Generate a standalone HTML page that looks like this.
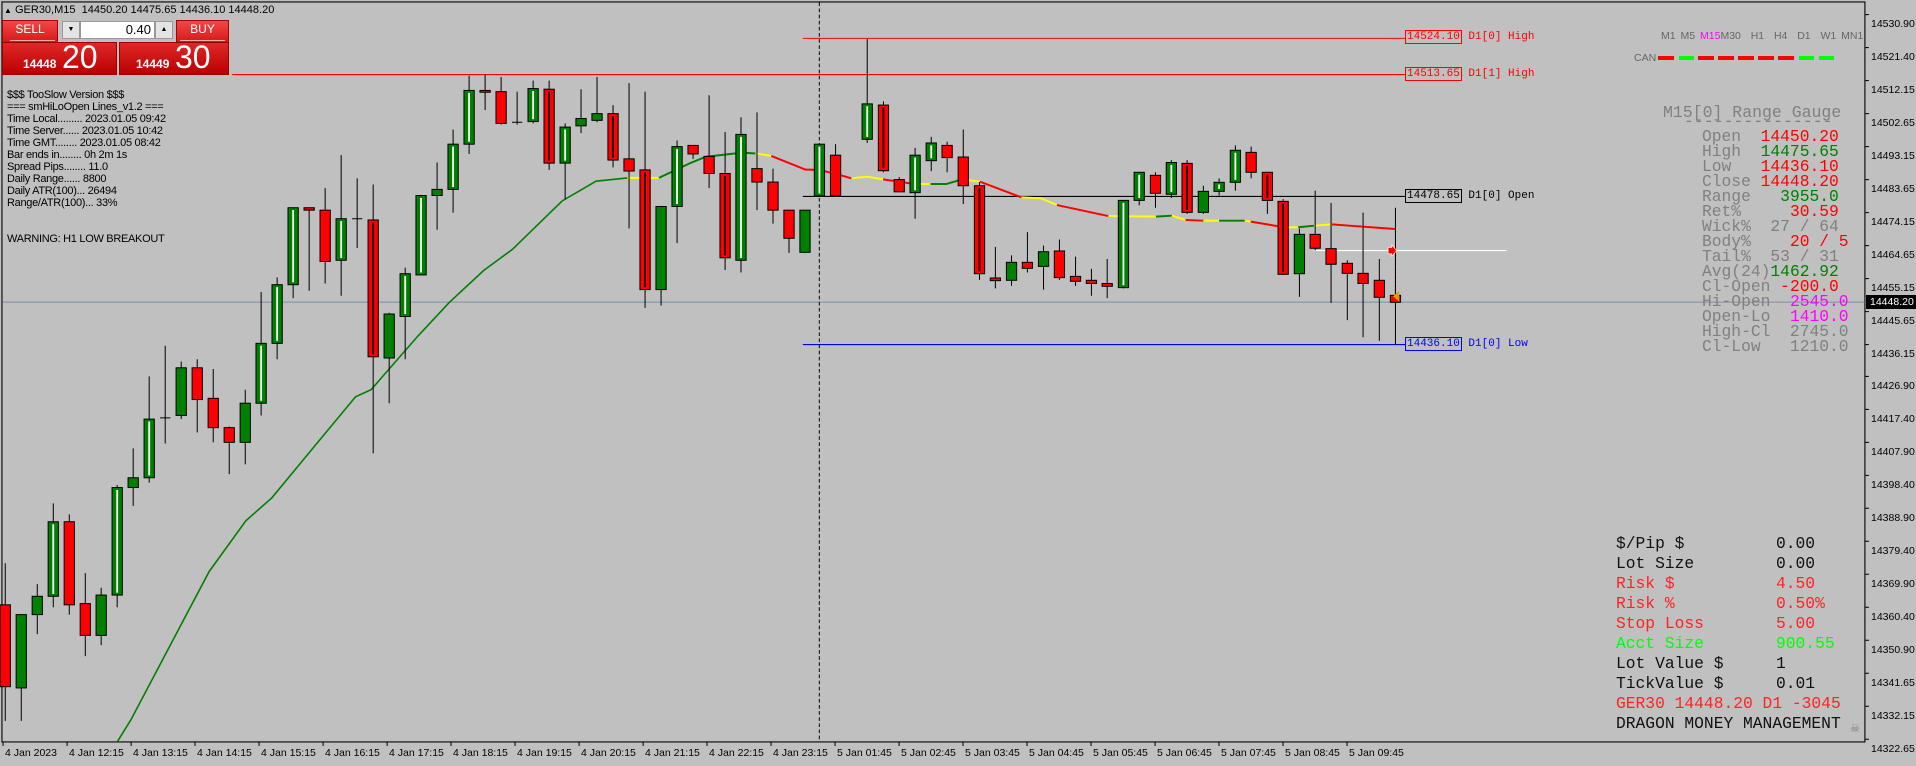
<!DOCTYPE html>
<html><head><meta charset="utf-8"><style>
*{margin:0;padding:0;box-sizing:border-box}
body{width:1916px;height:764px;background:#c0c0c0;position:relative;overflow:hidden;font-family:"Liberation Sans",sans-serif}
.a{position:absolute;white-space:pre}
.t{font-size:11px;color:#000;line-height:12px}
.ax{font-size:10.5px;color:#000}
.m{font-family:"Liberation Mono",monospace}
.rg{font-size:16.3px;line-height:15px;color:#808080}
.mm{font-size:16.3px;line-height:20px}
</style></head><body>
<svg class="a" style="left:0;top:0" width="1916" height="764" viewBox="0 0 1568 625.26" preserveAspectRatio="none">
<style>.w{stroke:#000;stroke-width:.82;fill:none}.g{fill:#008000;stroke:#000;stroke-width:.82}.r{fill:#f00;stroke:#000;stroke-width:.82}</style>
<!-- frame -->
<rect x="1.6" y="1.6" width="1524.6" height="605.6" fill="none" stroke="#000" stroke-width=".9"/>
<!-- price line -->
<line x1="2" y1="247.3" x2="1526" y2="247.3" stroke="#7890a8" stroke-width=".8"/>
<!-- level lines -->
<line x1="190" y1="61" x2="1150" y2="61" stroke="#f00" stroke-width=".9"/>
<line x1="657" y1="31.4" x2="1150" y2="31.4" stroke="#f00" stroke-width=".9"/>
<line x1="657" y1="160.8" x2="1150" y2="160.8" stroke="#000" stroke-width=".9"/>
<line x1="657" y1="282" x2="1150" y2="282" stroke="#00f" stroke-width=".9"/>
<line x1="670.5" y1="2" x2="670.5" y2="607" stroke="#000" stroke-width=".8" stroke-dasharray="3,2"/>
<line x1="1075" y1="205.1" x2="1233" y2="205.1" stroke="#fff" stroke-width=".9"/>
<line x1="1142" y1="205" x2="1142" y2="245" stroke="#f00" stroke-width=".9" stroke-dasharray="2,1.5"/>
<!-- MA -->
<polyline fill="none" stroke="#008000" stroke-width="1.3" points="96,607 107,589.3 141.2,524.5 171.2,467.7 201.1,426.3 222.5,407.4 256.7,366 291,324.7 303.8,318.8 342.3,274.7 368,247.2 395.8,221.4 419.3,204.1 460,164.5 487.8,148.3 513.5,145.6"/>
<polyline fill="none" stroke="#ff0" stroke-width="1.6" points="513.5,145.6 539.2,145.6"/>
<polyline fill="none" stroke="#008000" stroke-width="1.6" points="539.2,145.6 564.8,133.5 577.7,128.3 607.6,124.9 618.3,125.6"/>
<polyline fill="none" stroke="#ff0" stroke-width="1.6" points="618.3,125.6 631.2,127.6"/>
<polyline fill="none" stroke="#f00" stroke-width="1.6" points="631.2,127.6 659,138.7 670.9,139.1 687,143.2 696.8,145.9"/>
<polyline fill="none" stroke="#ff0" stroke-width="1.6" points="696.8,145.9 709.7,144.6 722.7,146.8"/>
<polyline fill="none" stroke="#f00" stroke-width="1.6" points="722.7,146.8 748.5,150.6"/>
<polyline fill="none" stroke="#ff0" stroke-width="1.6" points="748.5,150.6 761.5,150.6"/>
<polyline fill="none" stroke="#008000" stroke-width="1.6" points="761.5,150.6 774.4,150.6 787.4,146.8"/>
<polyline fill="none" stroke="#ff0" stroke-width="1.6" points="787.4,146.8 802,148.7"/>
<polyline fill="none" stroke="#f00" stroke-width="1.6" points="802,148.7 835.9,161.5"/>
<polyline fill="none" stroke="#ff0" stroke-width="1.6" points="835.9,161.5 852.1,162.3 865,167.8"/>
<polyline fill="none" stroke="#f00" stroke-width="1.6" points="865,167.8 907.1,176.8"/>
<polyline fill="none" stroke="#ff0" stroke-width="1.6" points="907.1,176.8 946,177.3"/>
<polyline fill="none" stroke="#008000" stroke-width="1.6" points="946,177.3 959,176.5"/>
<polyline fill="none" stroke="#ff0" stroke-width="1.6" points="959,176.5 970.2,180"/>
<polyline fill="none" stroke="#f00" stroke-width="1.6" points="970.2,180 984.8,180.6"/>
<polyline fill="none" stroke="#ff0" stroke-width="1.6" points="984.8,180.6 997.7,180.6"/>
<polyline fill="none" stroke="#008000" stroke-width="1.6" points="997.7,180.6 1018.7,180.6"/>
<polyline fill="none" stroke="#ff0" stroke-width="1.6" points="1018.7,180.6 1023.6,181.4"/>
<polyline fill="none" stroke="#f00" stroke-width="1.6" points="1023.6,181.4 1051,186"/>
<polyline fill="none" stroke="#ff0" stroke-width="1.6" points="1051,186 1062.4,186"/>
<polyline fill="none" stroke="#008000" stroke-width="1.6" points="1062.4,186 1075.4,184.7"/>
<polyline fill="none" stroke="#ff0" stroke-width="1.6" points="1075.4,184.7 1090,183.6"/>
<polyline fill="none" stroke="#f00" stroke-width="1.6" points="1090,183.6 1104.5,184.7 1141.7,187.4"/>
<!-- wicks -->
<path class="w" d="M4.3 461V590M17.4 503V590M30.5 478V519M43.6 412V497M56.7 421V503M69.8 469V537M82.8 481V528M95.9 397V497M109 367V414M122.1 308V395M135.2 283V363M148.3 296V343M161.4 294V354M174.5 302V362M187.6 349V388M200.7 319V380M213.7 239V340M226.8 227V294M239.9 170V244M253 170V238M266.1 154V232M279.2 127V242M292.3 146V203M305.4 151V371M318.5 256V330M331.6 219V294M344.6 160V225M357.7 133V188M370.8 106V174M383.9 62V126M397 61V90M410.1 63V102M423.2 75V102M436.3 66V101M449.4 66V139M462.5 101V163M475.5 73V109M488.6 63V100M501.7 86V137M514.8 68V187M527.9 75V252M541 169V250M554.1 115V199M567.2 119V130M580.3 78V154M593.4 108V221M606.4 96V223M619.5 92V172M632.6 138V183M645.7 172V207M658.8 172V207M670.6 118V160M683.8 118V160M709.7 32V117M723 83V141M735.9 145V157M748.9 121V179M762.1 112V140M775.1 116V141M788.3 106V167M801.6 149V229M814.6 202V236M827.8 209V234M840.8 190V223M854 201V237M867 196V229M880.2 210V234M893.2 220V242M906.1 212V244M919.4 164V236M932.3 141V168M945.6 141V170M958.6 131V162M971.5 131V175M984.8 152V175M997.7 146V160M1011 119V156M1023.9 120V146M1037.2 141V175M1050.1 163V225M1063.4 187V243M1076.3 156V205M1089.3 166V248M1102.6 213V262M1115.5 174V276M1128.8 212V279M1142 170V282M131 342H139.4M288.1 179H296.5M419 100H427.4"/>
<!-- bodies -->
<rect class="r" x="0.1" y="495" width="8.4" height="67"/>
<rect class="g" x="13.2" y="503" width="8.4" height="60"/>
<rect class="g" x="26.3" y="488" width="8.4" height="15"/>
<rect class="g" x="39.4" y="427" width="8.4" height="61"/>
<rect class="r" x="52.5" y="427" width="8.4" height="68"/>
<rect class="r" x="65.6" y="494" width="8.4" height="26"/>
<rect class="g" x="78.6" y="487" width="8.4" height="33"/>
<rect class="g" x="91.7" y="399" width="8.4" height="88"/>
<rect class="g" x="104.8" y="391" width="8.4" height="8"/>
<rect class="g" x="117.9" y="343" width="8.4" height="48"/>
<rect class="g" x="144.1" y="301" width="8.4" height="39"/>
<rect class="r" x="157.2" y="301" width="8.4" height="26"/>
<rect class="r" x="170.3" y="326" width="8.4" height="24"/>
<rect class="r" x="183.4" y="350" width="8.4" height="12"/>
<rect class="g" x="196.5" y="330" width="8.4" height="32"/>
<rect class="g" x="209.5" y="281" width="8.4" height="49"/>
<rect class="g" x="222.6" y="233" width="8.4" height="48"/>
<rect class="g" x="235.7" y="170" width="8.4" height="63"/>
<rect class="r" x="248.8" y="170" width="8.4" height="2"/>
<rect class="r" x="261.9" y="172" width="8.4" height="42"/>
<rect class="g" x="275" y="179" width="8.4" height="34"/>
<rect class="r" x="301.2" y="180" width="8.4" height="112"/>
<rect class="g" x="314.3" y="257" width="8.4" height="36"/>
<rect class="g" x="327.4" y="224" width="8.4" height="35"/>
<rect class="g" x="340.4" y="160" width="8.4" height="65"/>
<rect class="g" x="353.5" y="155" width="8.4" height="5"/>
<rect class="g" x="366.6" y="118" width="8.4" height="37"/>
<rect class="g" x="379.7" y="74" width="8.4" height="44"/>
<rect class="r" x="392.8" y="74" width="8.4" height="1.5"/>
<rect class="r" x="405.9" y="75" width="8.4" height="26"/>
<rect class="g" x="432.1" y="72.5" width="8.4" height="27"/>
<rect class="r" x="445.2" y="73" width="8.4" height="60.5"/>
<rect class="g" x="458.3" y="104" width="8.4" height="29.5"/>
<rect class="g" x="471.3" y="97" width="8.4" height="6"/>
<rect class="g" x="484.4" y="93" width="8.4" height="5.5"/>
<rect class="r" x="497.5" y="93" width="8.4" height="38"/>
<rect class="r" x="510.6" y="130" width="8.4" height="10"/>
<rect class="r" x="523.7" y="139" width="8.4" height="98"/>
<rect class="g" x="536.8" y="169" width="8.4" height="68"/>
<rect class="g" x="549.9" y="120" width="8.4" height="49"/>
<rect class="r" x="563" y="119" width="8.4" height="7"/>
<rect class="r" x="576.1" y="128" width="8.4" height="14"/>
<rect class="r" x="589.2" y="142" width="8.4" height="69"/>
<rect class="g" x="602.2" y="110" width="8.4" height="103"/>
<rect class="r" x="615.3" y="138" width="8.4" height="11"/>
<rect class="r" x="628.4" y="149" width="8.4" height="23"/>
<rect class="r" x="641.5" y="172" width="8.4" height="23"/>
<rect class="g" x="654.6" y="172" width="8.4" height="34.5"/>
<rect class="g" x="666.4" y="118" width="8.4" height="42.4"/>
<rect class="r" x="679.6" y="127" width="8.4" height="33.4"/>
<rect class="g" x="705.5" y="85" width="8.4" height="29"/>
<rect class="r" x="718.8" y="86" width="8.4" height="53.7"/>
<rect class="r" x="731.7" y="147" width="8.4" height="10"/>
<rect class="g" x="744.7" y="127" width="8.4" height="30.7"/>
<rect class="g" x="757.9" y="117" width="8.4" height="14.5"/>
<rect class="r" x="770.9" y="119" width="8.4" height="10"/>
<rect class="r" x="784.1" y="128.5" width="8.4" height="23.5"/>
<rect class="r" x="797.4" y="152" width="8.4" height="72"/>
<rect class="r" x="810.4" y="227.5" width="8.4" height="2.2"/>
<rect class="g" x="823.6" y="214.7" width="8.4" height="14.7"/>
<rect class="r" x="836.6" y="214.7" width="8.4" height="4.9"/>
<rect class="g" x="849.8" y="206" width="8.4" height="12"/>
<rect class="r" x="862.8" y="205.4" width="8.4" height="21.8"/>
<rect class="r" x="876" y="226.2" width="8.4" height="4"/>
<rect class="r" x="889" y="229.4" width="8.4" height="2.6"/>
<rect class="r" x="901.9" y="232" width="8.4" height="2.3"/>
<rect class="g" x="915.2" y="164" width="8.4" height="71.4"/>
<rect class="g" x="928.1" y="141" width="8.4" height="23"/>
<rect class="r" x="941.4" y="143.5" width="8.4" height="14.7"/>
<rect class="g" x="954.4" y="133" width="8.4" height="26"/>
<rect class="r" x="967.3" y="133.7" width="8.4" height="40.1"/>
<rect class="g" x="980.6" y="156.6" width="8.4" height="17.2"/>
<rect class="g" x="993.5" y="149.2" width="8.4" height="7.4"/>
<rect class="g" x="1006.8" y="123" width="8.4" height="26.2"/>
<rect class="r" x="1019.7" y="124.7" width="8.4" height="16.3"/>
<rect class="r" x="1033" y="141" width="8.4" height="23"/>
<rect class="r" x="1045.9" y="164.8" width="8.4" height="59.7"/>
<rect class="g" x="1059.2" y="191.8" width="8.4" height="32.2"/>
<rect class="r" x="1072.1" y="191.8" width="8.4" height="11.4"/>
<rect class="r" x="1085.1" y="203.5" width="8.4" height="12.8"/>
<rect class="r" x="1098.4" y="215.5" width="8.4" height="8.2"/>
<rect class="r" x="1111.3" y="223.7" width="8.4" height="8.3"/>
<rect class="r" x="1124.6" y="229.4" width="8.4" height="13.9"/>
<rect class="r" x="1137.8" y="241.7" width="8.4" height="5.7"/>
<!-- stripes -->
<path stroke="#fff" stroke-width="1.5" fill="none" d="M43.6 429V486M95.9 401V485M122.1 345V389M213.7 283V328M226.8 235V279M239.9 172V231M279.2 181V211M331.6 226V257M344.6 162V223M370.8 120V153M383.9 76V116M436.3 74.5V97.5M462.5 106V131.5M554.1 122V167M606.4 112V211M670.6 120V158.4M709.7 87V112M748.9 129V155.7M762.1 119V129.5M919.4 166V233.4M932.3 143V162M958.6 135V157M997.7 151V154.6M1011 125V147.2"/>
<path stroke="#000" stroke-width="1.5" fill="none" d="M305.4 182V290M449.4 75V131.5M501.7 95V129M527.9 141V235M593.4 144V209M723 88V137.7M801.6 154V222M971.5 135.7V171.8M1037.2 143V162M1050.1 166.8V222.5"/>
<!-- arrows -->
<path d="M1136 202.5h3v-2l4 4.6-4 4.6v-2h-3z" fill="#f00" stroke="#fff" stroke-width=".5"/>
<path d="M1145 238l-5 4.5 5 4.5z" fill="#e0a000"/>
<!-- axis ticks -->
<path class="w" d="M1526 12h3.5M1526 39h3.5M1526 66h3.5M1526 93h3.5M1526 120h3.5M1526 147h3.5M1526 174h3.5M1526 201h3.5M1526 228h3.5M1526 255h3.5M1526 282h3.5M1526 308h3.5M1526 335h3.5M1526 362h3.5M1526 389h3.5M1526 416h3.5M1526 443h3.5M1526 470h3.5M1526 497h3.5M1526 524h3.5M1526 551h3.5M1526 578h3.5M1526 605h3.5"/>
<path class="w" d="M2.5 607v3.5M54.9 607v3.5M107.3 607v3.5M159.6 607v3.5M212 607v3.5M264.4 607v3.5M316.8 607v3.5M369.1 607v3.5M421.5 607v3.5M473.9 607v3.5M526.3 607v3.5M578.6 607v3.5M631 607v3.5M683.4 607v3.5M735.8 607v3.5M788.1 607v3.5M840.5 607v3.5M892.9 607v3.5M945.3 607v3.5M997.6 607v3.5M1050 607v3.5M1102.4 607v3.5"/>
</svg>

<!-- title -->
<div class="a t" style="left:4px;top:4px"><span style="font-size:8px">▲</span> GER30,M15  14450.20 14475.65 14436.10 14448.20</div>

<!-- trade panel -->
<div class="a" style="left:2px;top:20px;width:56px;height:23px;background:linear-gradient(#f04848,#d81818);border:1px solid #a00"></div>
<div class="a" style="left:10px;top:40px;width:45px;height:1px;background:#f4b0b0"></div>
<div class="a" style="left:2px;top:22px;width:56px;text-align:center;color:#fff;font-size:12px">SELL</div>
<div class="a" style="left:2px;top:42px;width:115px;height:33px;background:linear-gradient(#e02828,#b80000);border:1px solid #900"></div>
<div class="a" style="left:23px;top:57px;color:#fff;font-size:12px;font-weight:bold">14448</div>
<div class="a" style="left:62px;top:39px;color:#fff;font-size:32px">20</div>
<div class="a" style="left:62px;top:21px;width:18px;height:18px;background:#e4e4e4;border:1px solid #999;font-size:7px;text-align:center;line-height:16px">▼</div>
<div class="a" style="left:80px;top:21px;width:75px;height:18px;background:#fff;border:1px solid #999;font-size:13px;text-align:right;padding-right:3px;line-height:16px">0.40</div>
<div class="a" style="left:155px;top:21px;width:18px;height:18px;background:#e4e4e4;border:1px solid #999;font-size:7px;text-align:center;line-height:16px">▲</div>
<div class="a" style="left:176px;top:20px;width:53px;height:23px;background:linear-gradient(#f04848,#d81818);border:1px solid #a00"></div>
<div class="a" style="left:180px;top:40px;width:45px;height:1px;background:#f4b0b0"></div>
<div class="a" style="left:176px;top:22px;width:53px;text-align:center;color:#fff;font-size:12px">BUY</div>
<div class="a" style="left:119px;top:42px;width:110px;height:33px;background:linear-gradient(#e02828,#b80000);border:1px solid #900"></div>
<div class="a" style="left:136px;top:57px;color:#fff;font-size:12px;font-weight:bold">14449</div>
<div class="a" style="left:175px;top:39px;color:#fff;font-size:32px">30</div>

<!-- info text -->
<div class="a t" style="left:7px;top:89px;letter-spacing:-0.3px">$$$ TooSlow Version $$$
=== smHiLoOpen Lines_v1.2 ===
Time Local......... 2023.01.05 09:42
Time Server...... 2023.01.05 10:42
Time GMT........ 2023.01.05 08:42
Bar ends in........ 0h 2m 1s
Spread Pips........ 11.0
Daily Range...... 8800
Daily ATR(100)... 26494
Range/ATR(100)... 33%</div>
<div class="a t" style="left:7px;top:233px;letter-spacing:-0.3px">WARNING: H1 LOW BREAKOUT</div>

<!-- level labels -->
<div class="a m" style="left:1405px;top:31px;font-size:11px;color:#f00;line-height:13px"><span style="border:1px solid #f00;padding:0 1px">14524.10</span> D1[0] High</div>
<div class="a m" style="left:1405px;top:68px;font-size:11px;color:#f00;line-height:13px"><span style="border:1px solid #f00;padding:0 1px">14513.65</span> D1[1] High</div>
<div class="a m" style="left:1405px;top:190px;font-size:11px;color:#000;line-height:13px"><span style="border:1px solid #000;padding:0 1px">14478.65</span> D1[0] Open</div>
<div class="a m" style="left:1405px;top:338px;font-size:11px;color:#00f;line-height:13px"><span style="border:1px solid #00f;padding:0 1px">14436.10</span> D1[0] Low</div>

<!-- TF panel -->
<div class="a" style="left:1661px;top:30px;font-size:10.5px;color:#666;word-spacing:2px">M1 M5 <span style="color:#f0f">M15</span>M30  H1  H4  D1  W1 MN1</div>
<div class="a" style="left:1634px;top:52px;font-size:10.5px;color:#666">CAN</div>
<div class="a" style="left:1658px;top:56px;width:16px;height:4px;background:#f00"></div>
<div class="a" style="left:1679px;top:56px;width:15px;height:4px;background:#0f0"></div>
<div class="a" style="left:1698px;top:56px;width:16px;height:4px;background:#f00"></div>
<div class="a" style="left:1718px;top:56px;width:16px;height:4px;background:#f00"></div>
<div class="a" style="left:1738px;top:56px;width:16px;height:4px;background:#f00"></div>
<div class="a" style="left:1758px;top:56px;width:16px;height:4px;background:#f00"></div>
<div class="a" style="left:1778px;top:56px;width:16px;height:4px;background:#f00"></div>
<div class="a" style="left:1799px;top:56px;width:15px;height:4px;background:#0f0"></div>
<div class="a" style="left:1819px;top:56px;width:15px;height:4px;background:#0f0"></div>

<!-- range gauge -->
<div class="a m" style="left:1663px;top:103px;font-size:16.5px;color:#808080">M15[0] Range Gauge</div>
<div class="a m" style="left:1684px;top:112px;font-size:16.5px;color:#808080">---------------</div>
<div class="a m rg" style="left:1702px;top:129px">Open  <span style="color:#f00">14450.20</span>
High  <span style="color:#008000">14475.65</span>
Low   <span style="color:#f00">14436.10</span>
Close <span style="color:#f00">14448.20</span>
Range   <span style="color:#008000">3955.0</span>
Ret%     <span style="color:#f00">30.59</span>
Wick%  27 / 64
Body%  <span style="color:#f00">  20 / 5</span>
Tail%  53 / 31
Avg(24)<span style="color:#008000">1462.92</span>
Cl-Open <span style="color:#f00">-200.0</span>
Hi-Open  <span style="color:#f0f">2545.0</span>
Open-Lo  <span style="color:#f0f">1410.0</span>
High-Cl  2745.0
Cl-Low   1210.0</div>

<!-- money mgmt -->
<div class="a m mm" style="left:1616px;top:534px;color:#111">$/Pip $</div><div class="a m mm" style="left:1776px;top:534px;color:#111">0.00</div>
<div class="a m mm" style="left:1616px;top:554px;color:#111">Lot Size</div><div class="a m mm" style="left:1776px;top:554px;color:#111">0.00</div>
<div class="a m mm" style="left:1616px;top:574px;color:#f22">Risk $</div><div class="a m mm" style="left:1776px;top:574px;color:#f22">4.50</div>
<div class="a m mm" style="left:1616px;top:594px;color:#f22">Risk %</div><div class="a m mm" style="left:1776px;top:594px;color:#f22">0.50%</div>
<div class="a m mm" style="left:1616px;top:614px;color:#f22">Stop Loss</div><div class="a m mm" style="left:1776px;top:614px;color:#f22">5.00</div>
<div class="a m mm" style="left:1616px;top:634px;color:#0f0">Acct Size</div><div class="a m mm" style="left:1776px;top:634px;color:#0f0">900.55</div>
<div class="a m mm" style="left:1616px;top:654px;color:#111">Lot Value $</div><div class="a m mm" style="left:1776px;top:654px;color:#111">1</div>
<div class="a m mm" style="left:1616px;top:674px;color:#111">TickValue $</div><div class="a m mm" style="left:1776px;top:674px;color:#111">0.01</div>
<div class="a m mm" style="left:1616px;top:694px;color:#f22">GER30 14448.20 D1 -3045</div>
<div class="a m mm" style="left:1616px;top:714px;color:#111">DRAGON MONEY MANAGEMENT</div>
<div class="a" style="left:1850px;top:722px;font-size:11px;color:#777">☠</div>

<!-- price axis labels -->
<div class="a ax" style="left:1871px;top:8px;line-height:32.95px">14530.90
14521.40
14512.15
14502.65
14493.15
14483.65
14474.15
14464.65
14455.15
14445.65
14436.15
14426.90
14417.40
14407.90
14398.40
14388.90
14379.40
14369.90
14360.40
14350.90
14341.65
14332.15
14322.65</div>
<div class="a ax" style="left:1866px;top:295px;width:50px;height:14px;background:#000;color:#fff;padding-left:4px;line-height:14px">14448.20</div>

<!-- time labels -->
<div class="a ax" style="left:5px;top:747px">4 Jan 2023</div>
<div class="a ax" style="left:69px;top:747px">4 Jan 12:15</div>
<div class="a ax" style="left:133px;top:747px">4 Jan 13:15</div>
<div class="a ax" style="left:197px;top:747px">4 Jan 14:15</div>
<div class="a ax" style="left:261px;top:747px">4 Jan 15:15</div>
<div class="a ax" style="left:325px;top:747px">4 Jan 16:15</div>
<div class="a ax" style="left:389px;top:747px">4 Jan 17:15</div>
<div class="a ax" style="left:453px;top:747px">4 Jan 18:15</div>
<div class="a ax" style="left:517px;top:747px">4 Jan 19:15</div>
<div class="a ax" style="left:581px;top:747px">4 Jan 20:15</div>
<div class="a ax" style="left:645px;top:747px">4 Jan 21:15</div>
<div class="a ax" style="left:709px;top:747px">4 Jan 22:15</div>
<div class="a ax" style="left:773px;top:747px">4 Jan 23:15</div>
<div class="a ax" style="left:837px;top:747px">5 Jan 01:45</div>
<div class="a ax" style="left:901px;top:747px">5 Jan 02:45</div>
<div class="a ax" style="left:965px;top:747px">5 Jan 03:45</div>
<div class="a ax" style="left:1029px;top:747px">5 Jan 04:45</div>
<div class="a ax" style="left:1093px;top:747px">5 Jan 05:45</div>
<div class="a ax" style="left:1157px;top:747px">5 Jan 06:45</div>
<div class="a ax" style="left:1221px;top:747px">5 Jan 07:45</div>
<div class="a ax" style="left:1285px;top:747px">5 Jan 08:45</div>
<div class="a ax" style="left:1349px;top:747px">5 Jan 09:45</div>
</body></html>
